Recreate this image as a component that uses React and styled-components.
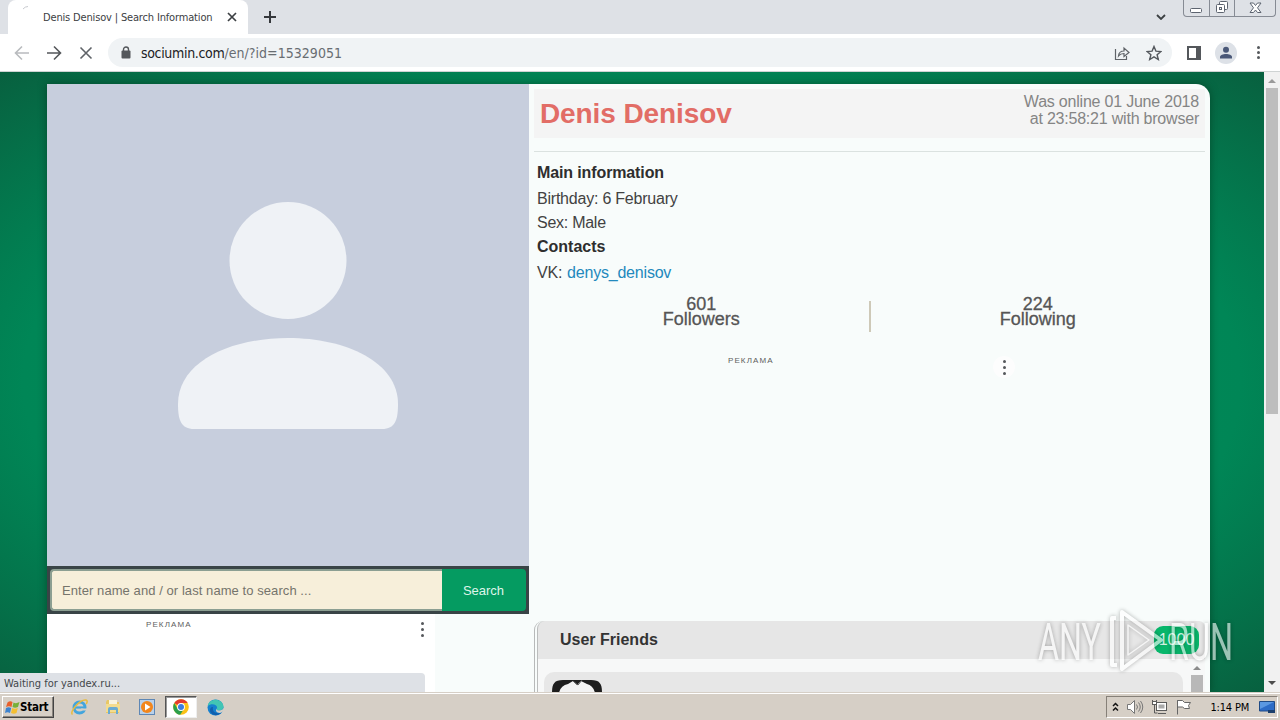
import React from 'react';
import styled, { createGlobalStyle } from 'styled-components';

const App = () => {
  return (
    <Screen>
      <GlobalStyle />
      <TabStrip>
        <Tab>
          <Spinner viewBox="0 0 16 16">
            <path d="M1 4 Q3 1.500 6 1.500" />
          </Spinner>
          <TabTitle>Denis Denisov | Search Information</TabTitle>
          <svg width="10" height="10" viewBox="0 0 10 10" stroke="#3c4043" strokeWidth="1.700">
            <path d="M1 1l8 8M9 1l-8 8" />
          </svg>
        </Tab>
        <NewTab viewBox="0 0 12 12">
          <path d="M6 0v12M0 6h12" />
        </NewTab>
        <TabSearch viewBox="0 0 10 6">
          <path d="M1 1l4 4 4-4" />
        </TabSearch>
        <WindowButtons>
          <WindowButton $w={25}>
            <svg width="13" height="6" fill="#fff" stroke="#5d6470">
              <rect x="0.5" y="0.5" width="11" height="4" rx="1" />
            </svg>
          </WindowButton>
          <WindowButton $w={25}>
            <svg width="14" height="14" fill="#fff" stroke="#5d6470">
              <rect x="4.500" y="1.500" width="8" height="8" rx="1" />
              <rect x="1.500" y="4.500" width="8" height="8" rx="1" />
              <rect x="4.500" y="7.500" width="2" height="2" />
            </svg>
          </WindowButton>
          <WindowButton $w={41}>
            <svg width="13" height="12" fill="#fff" stroke="#5d6470">
              <path d="M1 1h3.500l2 2.500 2-2.500H12L8.500 5.800 12 10.500H8.500l-2-2.500-2 2.500H1l3.500-4.700z" />
            </svg>
          </WindowButton>
        </WindowButtons>
      </TabStrip>

      <Toolbar>
        <NavIcon viewBox="0 0 16 16" $color="#b9bbbe">
          <path d="M15 8H2M8 1.500L1.500 8 8 14.500" />
        </NavIcon>
        <NavIcon viewBox="0 0 16 16" $color="#54575b">
          <path d="M1 8h13M8 1.500L14.500 8 8 14.500" />
        </NavIcon>
        <NavIcon viewBox="0 0 16 16" $color="#5f6368">
          <path d="M2.500 2.500l11 11M13.500 2.500l-11 11" />
        </NavIcon>
        <Omnibox>
          <svg width="10" height="13" viewBox="0 0 10 13">
            <rect x="0.500" y="4.500" width="9" height="8" rx="1" fill="#54575b" />
            <path d="M2.500 5V3.500a2.500 2.500 0 0 1 5 0V5" fill="none" stroke="#54575b" strokeWidth="1.400" />
          </svg>
          <Url>
            <b>sociumin.com</b>/en/?id=15329051
          </Url>
          <svg width="16" height="16" viewBox="0 0 16 16" fill="none" stroke="#5f6368" strokeWidth="1.200">
            <path d="M1.500 4v10.500h11V11M4.500 11c.3-3.500 2-5 5.500-5V3l5 4.500-5 4V8.500c-2.500 0-4 .5-5.500 2.500z" />
          </svg>
          <Star viewBox="0 0 16 16">
            <path d="M8 1.500l1.900 4.600 5 .4-3.800 3.200 1.200 4.800L8 11.900l-4.300 2.600 1.200-4.800L1.100 6.500l5-.4z" />
          </Star>
        </Omnibox>
        <SidePanel viewBox="0 0 14 14">
          <path d="M0 0h14v14H0zM2 2v10h7V2z" fillRule="evenodd" />
        </SidePanel>
        <Profile>
          <svg width="14" height="14" viewBox="0 0 14 14" fill="#4a5878">
            <circle cx="7" cy="3.700" r="3" />
            <path d="M1 12.500v-1.500c0-2 3-3 6-3s6 1 6 3v1.500z" />
          </svg>
        </Profile>
        <Dots $size={3} $gap={2}>
          <i /><i /><i />
        </Dots>
      </Toolbar>

      <Viewport>
        <Page>
          <Container>
            <LeftColumn>
              <Avatar viewBox="0 0 482 482">
                <circle cx="241" cy="176.500" r="58.500" />
                <path d="M131 320c0-42 52-66 110-66s110 24 110 66c0 16-3 25-16 25H147c-13 0-16-9-16-25z" />
              </Avatar>
              <SearchBar>
                <SearchInput>Enter name and / or last name to search ...</SearchInput>
                <SearchButton>Search</SearchButton>
              </SearchBar>
              <LeftAd>
                <AdLabel>РЕКЛАМА</AdLabel>
                <Dots $size={3} $gap={3}>
                  <i /><i /><i />
                </Dots>
              </LeftAd>
            </LeftColumn>
            <RightColumn>
              <Header>
                <Name>Denis Denisov</Name>
                <Online>
                  Was online 01 June 2018
                  <br />
                  at 23:58:21 with browser
                </Online>
              </Header>
              <Info>
                <InfoTitle $ls={-0.12}>Main information</InfoTitle>
                <InfoRow $h={26} $ls={-0.22}>Birthday: 6 February</InfoRow>
                <InfoRow $h={22} $ls={-0.26}>Sex: Male</InfoRow>
                <InfoTitle $ls={0}>Contacts</InfoTitle>
                <InfoRow $h={26} $ls={-0.2}>
                  VK:&nbsp;<a>denys_denisov</a>
                </InfoRow>
              </Info>
              <Stats>
                <Stat>
                  601
                  <br />
                  Followers
                </Stat>
                <Divider />
                <Stat>
                  224
                  <br />
                  Following
                </Stat>
              </Stats>
              <RightAd>
                <AdLabel>РЕКЛАМА</AdLabel>
                <AdMenu>
                  <Dots $size={3} $gap={3}>
                    <i /><i /><i />
                  </Dots>
                </AdMenu>
              </RightAd>
              <Friends>
                <FriendsHeader>
                  User Friends
                  <Count>1000</Count>
                </FriendsHeader>
                <FriendsBody>
                  <FriendCard>
                    <svg width="52" height="14" viewBox="0 0 52 14">
                      <path d="M1 14C1 5 3 1 12 1h28c9 0 11 4 11 13z" fill="#1d1d1d" />
                      <path d="M8 14c1-5 4-8 9-9l5-3 4 4 4-4 6 3c4 1 7 4 8 9z" fill="#f2f2f2" />
                      <path d="M22 2l5 4 4-5" fill="none" stroke="#555" />
                    </svg>
                  </FriendCard>
                  <InnerScroll>
                    <Arrow $up $color="#8b8b8b" />
                    <InnerThumb />
                  </InnerScroll>
                </FriendsBody>
              </Friends>
            </RightColumn>
          </Container>
        </Page>
        <Scrollbar>
          <Arrow $up $color="#9a9a9a" />
          <Thumb />
          <Arrow $color="#4d4d4d" />
        </Scrollbar>
        <StatusBubble>Waiting for yandex.ru...</StatusBubble>
      </Viewport>

      <Taskbar>
        <StartButton>
          <svg width="15" height="15" viewBox="0 0 15 15">
            <path d="M2.500 2.500Q5 .5 7.500 2L6.500 7Q4 5.500 1 7z" fill="#e8602c" />
            <path d="M8.500 2.500Q11 4 14.500 2L13 7Q10 8.500 7.500 7z" fill="#78b03a" />
            <path d="M1 8Q3.500 6.500 6.200 8L5 13Q2.500 11.500 0 13z" fill="#3d83cf" />
            <path d="M7.200 8Q10 9.500 12.800 8L11.500 13Q9 14.500 6 13z" fill="#f4bf32" />
          </svg>
          Start
        </StartButton>
        <QuickLaunch>
          <TaskIcon>
            <svg width="18" height="18" viewBox="0 0 18 18" fill="none">
              <circle cx="9.500" cy="9.500" r="5.500" stroke="#43a5dd" strokeWidth="3" />
              <path d="M5 9.500h10" stroke="#43a5dd" strokeWidth="2.200" />
              <path d="M11 11.500h6" stroke="#d6cfc6" strokeWidth="2" />
              <path d="M2.500 16.500C-1 14 10 1 16 2c2 .5 1 3 0 4" stroke="#e9bb3e" strokeWidth="1.500" />
            </svg>
          </TaskIcon>
          <TaskIcon>
            <svg width="18" height="18" viewBox="0 0 18 18">
              <path d="M2 4l1-2h5l1 2h6v11H2z" fill="#e8c765" />
              <path d="M5 2h8v6H5z" fill="#f7f3df" />
              <path d="M2 6h14v8H2z" fill="#f3dc8e" />
              <path d="M4 16v-5q0-2 2-2h6q2 0 2 2v5h-2v-4H6v4z" fill="#69abd2" />
            </svg>
          </TaskIcon>
          <TaskIcon>
            <svg width="18" height="18" viewBox="0 0 18 18">
              <rect x="1.500" y="1.500" width="15" height="15" fill="#b9d1ea" stroke="#5e87b5" />
              <circle cx="9" cy="9" r="6" fill="#f2861c" />
              <path d="M7 5.500l5.500 3.500L7 12.500z" fill="#fff" />
            </svg>
          </TaskIcon>
          <TaskIcon $active>
            <svg width="16" height="16" viewBox="0 0 16 16">
              <circle cx="8" cy="8" r="7.800" fill="#fbc116" />
              <path d="M8 8L1.250 4.100A7.800 7.800 0 0 1 14.750 4.100H8z" fill="#e33b2e" />
              <path d="M1.250 4.100A7.800 7.800 0 0 0 7.200 15.800L11 9.800 8 8 4.500 9.700z" fill="#2c9f4b" />
              <circle cx="8" cy="8" r="3.900" fill="#fff" />
              <circle cx="8" cy="8" r="3" fill="#3b7de0" />
            </svg>
          </TaskIcon>
          <TaskIcon>
            <svg width="17" height="17" viewBox="0 0 17 17">
              <circle cx="8.500" cy="8.500" r="8" fill="#1580cf" />
              <path d="M.7 7C2-1.500 15-1.500 16.500 7c.3 3-2 4.500-4.500 4.500-2 0-3-1-2-2C11 6 5 3.500.7 7z" fill="#42c5b4" />
              <path d="M6 8c-1 4 2 7 8 6-4 4-11 2-11-3 0-2 1.500-3.500 3-3z" fill="#125fae" />
              <path d="M10 9.500c-1 1 0 2 2 2 2.500 0 4-1 4.500-2.500L17 12l-4 2c-4 0-5-3-3-4.500z" fill="#d6cfc6" />
            </svg>
          </TaskIcon>
        </QuickLaunch>
        <Tray>
          <svg width="7" height="10" fill="none" stroke="#111" strokeWidth="1.500">
            <path d="M1 4l2.500-2.500L6 4M1 8.500L3.500 6 6 8.500" />
          </svg>
          <svg width="18" height="16" viewBox="0 0 18 16" fill="none" stroke="#777">
            <path d="M1.500 5.500h3l4-4v13l-4-4h-3z" fill="#fff" />
            <path d="M10.500 5.500q2 2.500 0 5M12.500 3.500q3.500 4.500 0 9M14.500 2q4.500 6 0 12" />
          </svg>
          <svg width="17" height="16" viewBox="0 0 17 16" fill="#fff" stroke="#5b5b5b">
            <rect x="5.500" y="3.500" width="10" height="8" />
            <rect x="7.500" y="5.500" width="6" height="4" fill="#aaa" stroke="none" />
            <path d="M7 14.500h8M1.500 1v4h4V1M3.500 5v9h3" fill="none" />
            <rect x="1.500" y="2.500" width="4" height="3" />
          </svg>
          <svg width="17" height="16" viewBox="0 0 17 16" fill="#fff" stroke="#666">
            <path d="M2.500 1v14.500" />
            <path d="M2.500 1.500h5l2 2h6l-2 3 1 3h-5l-2-1.500h-5z" />
          </svg>
          <Clock>1:14 PM</Clock>
          <svg width="17" height="13" viewBox="0 0 17 13">
            <path d="M.5.500h15v9.500H.5z" fill="#2d6cc7" stroke="#204b86" />
            <path d="M1 1h14L1 8z" fill="#5b98e2" />
            <path d="M9 9h7v3H9z" fill="#1b3f6d" />
          </svg>
        </Tray>
      </Taskbar>

      <Watermark viewBox="0 0 200 70">
        <g fill="#fff" fontFamily="Roboto, sans-serif" fontSize="52" fontWeight="400">
          <text x="3" y="53.500" textLength="63" lengthAdjust="spacingAndGlyphs">ANY</text>
          <text x="134" y="53.500" textLength="64" lengthAdjust="spacingAndGlyphs">RUN</text>
        </g>
        <g fill="none" stroke="#fff" strokeWidth="4" strokeLinejoin="round">
          <path d="M87 6l39 28-39 29z" />
          <path d="M81 12h-4v47h5" />
          <path d="M93 19v30l21-15z" strokeWidth="1.500" />
        </g>
      </Watermark>
    </Screen>
  );
};

const GlobalStyle = createGlobalStyle`
  body {
    margin: 0;
    overflow: hidden;
  }
  * {
    box-sizing: border-box;
  }
  svg {
    display: block;
    flex-shrink: 0;
  }
`;

const Screen = styled.div`
  position: relative;
  width: 1280px;
  height: 720px;
  display: flex;
  flex-direction: column;
  overflow: hidden;
  background: #fff;
  font-family: 'Liberation Sans', Arial, sans-serif;
`;

const TabStrip = styled.div`
  height: 34px;
  display: flex;
  background: #dee1e6;
`;

const Tab = styled.div`
  width: 240px;
  margin-left: 8px;
  padding: 0 11px 0 14px;
  display: flex;
  align-items: center;
  background: #fff;
  border-radius: 8px 8px 0 0;
`;

const Spinner = styled.svg`
  width: 16px;
  height: 16px;
  margin-top: -8px;
  fill: none;
  stroke: #c8cacf;
`;

const TabTitle = styled.div`
  flex: 1;
  margin-left: 5px;
  font-family: 'DejaVu Sans Condensed', 'DejaVu Sans', sans-serif;
  font-stretch: condensed;
  font-size: 11px;
  letter-spacing: -0.16px;
  white-space: nowrap;
  color: #3c4043;
`;

const NewTab = styled.svg`
  width: 12px;
  height: 12px;
  margin: 11px 0 0 16px;
  stroke: #35383c;
  stroke-width: 2;
`;

const TabSearch = styled.svg`
  width: 10px;
  height: 6px;
  margin: 14px 17px 0 auto;
  fill: none;
  stroke: #3c4043;
  stroke-width: 1.8;
`;

const WindowButtons = styled.div`
  height: 17px;
  margin-right: 4px;
  display: flex;
  border: 1px solid #868b94;
  border-top: 0;
  border-radius: 0 0 4px 4px;
`;

const WindowButton = styled.div`
  width: ${(props) => props.$w}px;
  display: flex;
  align-items: flex-end;
  justify-content: center;
  padding-bottom: 2px;

  & + & {
    border-left: 1px solid #868b94;
  }
`;

const Toolbar = styled.div`
  height: 38px;
  padding: 0 20px 0 14px;
  display: flex;
  align-items: center;
  background: #fff;
  border-bottom: 1px solid #cfd3d3;
`;

const NavIcon = styled.svg`
  width: 16px;
  height: 16px;
  margin-right: 16px;
  fill: none;
  stroke: ${(props) => props.$color};
  stroke-width: 1.6;
`;

const Omnibox = styled.div`
  width: 1064px;
  height: 29px;
  margin-left: -2px;
  padding: 0 10px 0 13px;
  display: flex;
  align-items: center;
  border-radius: 15px;
  background: #f0f3f5;
`;

const Url = styled.div`
  flex: 1;
  margin-left: 10px;
  font-family: 'DejaVu Sans Condensed', 'DejaVu Sans', sans-serif;
  font-stretch: condensed;
  font-size: 14px;
  letter-spacing: 0.04px;
  color: #686d72;

  b {
    font-weight: 400;
    letter-spacing: -0.33px;
    color: #202124;
  }
`;

const Star = styled.svg`
  width: 16px;
  height: 16px;
  margin-left: 16px;
  fill: none;
  stroke: #54585d;
  stroke-width: 1.4;
`;

const SidePanel = styled.svg`
  width: 14px;
  height: 14px;
  margin-left: 15px;
  fill: #54575b;
`;

const Profile = styled.div`
  width: 22px;
  height: 22px;
  margin: 0 20px 0 14px;
  display: flex;
  align-items: center;
  justify-content: center;
  border-radius: 50%;
  background: #dde1e7;
`;

const Dots = styled.div`
  display: flex;
  flex-direction: column;
  gap: ${(props) => props.$gap}px;

  i {
    width: ${(props) => props.$size}px;
    height: ${(props) => props.$size}px;
    border-radius: 50%;
    background: #55585c;
  }
`;

const Viewport = styled.div`
  position: relative;
  height: 620px;
  display: flex;
`;

const Page = styled.div`
  width: 1264px;
  padding: 12px 54px 0 47px;
  overflow: hidden;
  background: radial-gradient(ellipse 895px 439px at 632px 310px, #00955d 0%, #008656 68%, #08603f 100%);
`;

const Container = styled.div`
  height: 608px;
  display: flex;
  border-radius: 0 14px 0 0;
  background: #f8fcfb;
  box-shadow: 0 0 8px rgba(0, 40, 20, 0.5);
`;

const LeftColumn = styled.div`
  width: 482px;
`;

const Avatar = styled.svg`
  width: 482px;
  height: 482px;
  background: #c7cedd;
  fill: #eff2f6;
`;

const SearchBar = styled.div`
  height: 48px;
  padding: 3px;
  display: flex;
  background: #394446;
`;

const SearchInput = styled.div`
  width: 392px;
  height: 42px;
  padding-left: 10px;
  border: 2px solid #8c9f92;
  border-right: 0;
  border-radius: 4px 0 0 4px;
  background: #f7efda;
  color: #75746c;
  font-size: 13px;
  line-height: 39px;
  letter-spacing: 0.07px;
`;

const SearchButton = styled.div`
  width: 84px;
  padding-right: 1px;
  border-radius: 0 4px 4px 0;
  background: #059b61;
  color: #dff5ea;
  font-size: 13px;
  line-height: 43px;
  text-align: center;
`;

const LeftAd = styled.div`
  width: 388px;
  height: 78px;
  padding: 5px 11px 0 99px;
  display: flex;
  justify-content: space-between;
  background: #fff;

  ${Dots} {
    margin-top: 3px;
  }
`;

const AdLabel = styled.div`
  font-size: 8px;
  line-height: 11px;
  letter-spacing: 1.1px;
  color: #5e5e5e;
`;

const RightColumn = styled.div`
  flex: 1;
  display: flex;
  flex-direction: column;
  padding: 5px 5px 0;
`;

const Header = styled.div`
  height: 63px;
  display: flex;
  justify-content: space-between;
  padding: 4px 6px 0;
  border-bottom: 1px solid #dbe2e0;
  background: linear-gradient(#f4f4f4, #f4f4f4) 0 0 / 100% 49px no-repeat;
`;

const Name = styled.div`
  font-size: 28px;
  line-height: 42px;
  font-weight: 700;
  letter-spacing: -0.1px;
  color: #e26d66;
`;

const Online = styled.div`
  font-size: 16px;
  line-height: 17px;
  text-align: right;
  letter-spacing: -0.21px;
  color: #858585;
`;

const Info = styled.div`
  height: 142px;
  padding: 8px 3px 0;
  font-size: 16px;
  color: #424242;
`;

const InfoTitle = styled.div`
  line-height: 26px;
  font-weight: 700;
  letter-spacing: ${(props) => props.$ls}px;
  color: #2e2e2e;
`;

const InfoRow = styled.div`
  line-height: ${(props) => props.$h}px;
  letter-spacing: ${(props) => props.$ls}px;

  a {
    margin-left: 0.6px;
    color: #2389bd;
  }
`;

const Stats = styled.div`
  height: 49px;
  display: flex;
  padding-top: 2px;
`;

const Stat = styled.div`
  flex: 1;
  padding-top: 1px;
  text-align: center;
  font-size: 18px;
  line-height: 15px;
  color: #555;
  -webkit-text-stroke: 0.3px #555;
`;

const Divider = styled.div`
  width: 2px;
  height: 31px;
  margin-top: 5px;
  background: #cec9b8;
`;

const RightAd = styled.div`
  height: 278px;
  padding: 12px 190px 0 194px;
  display: flex;
  justify-content: space-between;
`;

const AdMenu = styled.div`
  width: 22px;
  height: 22px;
  margin-top: 1px;
  padding: 4px 0 0 10px;
  border-radius: 50%;
  background: #fdfdfd;
`;

const Friends = styled.div`
  height: 71px;
  border-left: 1px solid #b7b9b9;
  border-radius: 9px 0 0 0;
  padding-left: 2px;
`;

const FriendsHeader = styled.div`
  height: 38px;
  display: flex;
  align-items: center;
  justify-content: space-between;
  padding: 0 6px 0 22px;
  border-left: 1px solid #bbbdbd;
  border-radius: 8px 6px 0 0;
  background: #e6e6e6;
  font-size: 16px;
  font-weight: 700;
  color: #333;
`;

const Count = styled.div`
  width: 45px;
  height: 28px;
  border-radius: 9px;
  background: #08b66b;
  color: #d5f5e7;
  font-size: 16px;
  font-weight: 400;
  line-height: 28px;
  text-align: center;
`;

const FriendsBody = styled.div`
  height: 33px;
  display: flex;
  border-left: 1px solid #bbbdbd;
  background: #f7f8f8;
`;

const FriendCard = styled.div`
  width: 639px;
  margin: 13px 0 0 6px;
  padding: 7px 0 0 7px;
  border-radius: 10px 10px 0 0;
  background: #e7e7e7;
`;

const InnerScroll = styled.div`
  width: 14px;
  margin-left: 7px;
  padding-top: 7px;
  display: flex;
  flex-direction: column;
  align-items: center;
`;

const Arrow = styled.div`
  border: 4px solid transparent;
  ${(props) => (props.$up ? 'border-top-width: 0;' : 'border-bottom-width: 0;')}
  ${(props) => (props.$up ? 'border-bottom' : 'border-top')}-color: ${(props) => props.$color};
`;

const InnerThumb = styled.div`
  width: 12px;
  flex: 1;
  margin-top: 5px;
  background: #b8b8b8;
`;

const Scrollbar = styled.div`
  width: 16px;
  display: flex;
  flex-direction: column;
  align-items: center;
  padding: 7px 0;
  background: #f1f1f1;
`;

const Thumb = styled.div`
  width: 12px;
  height: 326px;
  margin: 5px 0 auto;
  background: #bdbdbd;
`;

const StatusBubble = styled.div`
  position: absolute;
  left: 0;
  bottom: 0;
  width: 425px;
  height: 19px;
  padding-left: 4px;
  border-radius: 0 4px 0 0;
  background: #dee1e6;
  font-family: 'DejaVu Sans Condensed', 'DejaVu Sans', sans-serif;
  font-stretch: condensed;
  font-size: 11px;
  line-height: 21px;
  letter-spacing: 0;
  color: #43474b;
`;

const Taskbar = styled.div`
  height: 28px;
  display: flex;
  align-items: center;
  padding: 1px 2px 0;
  border-top: 1px solid #d6cfc6;
  background: #d6cfc6;
  box-shadow: inset 0 1px #fff;
`;

const StartButton = styled.div`
  width: 52px;
  height: 22px;
  display: flex;
  align-items: center;
  padding-left: 2px;
  border: 1px solid;
  border-color: #fff #444 #444 #fff;
  box-shadow: inset -1px -1px #8a857e;
  font-family: 'DejaVu Sans Condensed', 'DejaVu Sans', sans-serif;
  font-stretch: condensed;
  font-size: 11.5px;
  font-weight: 700;
  letter-spacing: -0.25px;
  color: #000;
`;

const QuickLaunch = styled.div`
  display: flex;
  gap: 2px;
  margin-left: 9px;
`;

const TaskIcon = styled.div`
  width: 32px;
  height: 22px;
  display: flex;
  align-items: center;
  justify-content: center;
  border: 1px solid transparent;
  ${(props) => props.$active && 'background: #fff; border-color: #555 #eee #eee #555; box-shadow: inset 1px 1px #999;'}
`;

const Tray = styled.div`
  width: 172px;
  height: 22px;
  margin-left: auto;
  padding: 0 1px 0 5px;
  display: flex;
  align-items: center;
  gap: 7px;
  border: 1px solid;
  border-color: #868078 #fff #fff #868078;
`;

const Clock = styled.div`
  flex: 1;
  padding-right: 3px;
  text-align: right;
  font-family: 'DejaVu Sans Condensed', 'DejaVu Sans', sans-serif;
  font-stretch: condensed;
  font-size: 11px;
  letter-spacing: -0.2px;
  white-space: nowrap;
  color: #000;
`;

const Watermark = styled.svg`
  position: absolute;
  left: 1035px;
  top: 606px;
  width: 200px;
  height: 70px;
  overflow: visible;
  opacity: 0.6;
  filter: drop-shadow(0 0 2px rgba(0, 0, 0, 0.5));
`;

export default App;
